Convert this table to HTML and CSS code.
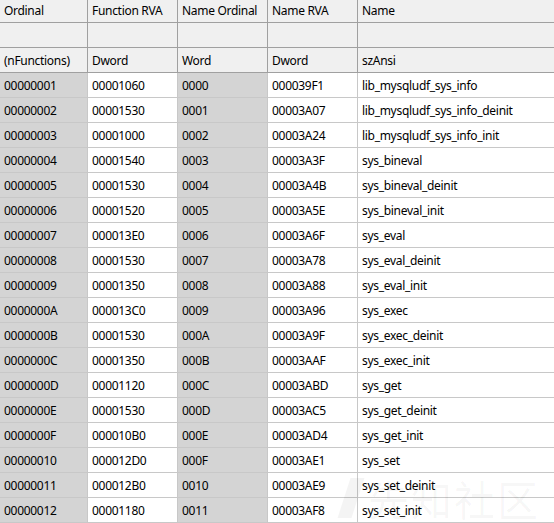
FILE: index.html
```html
<!DOCTYPE html>
<html>
<head>
<meta charset="utf-8">
<link rel="stylesheet" href="styles.css">
</head>
<body>
<div class="wrap">
<table class="grid">
<colgroup><col class="c1"><col class="c2"><col class="c3"><col class="c4"><col class="c5"></colgroup>
<thead>
<tr class="h1"><th>Ordinal</th><th>Function RVA</th><th>Name Ordinal</th><th>Name RVA</th><th>Name</th></tr>
<tr class="h2"><th></th><th></th><th></th><th></th><th></th></tr>
<tr class="h3"><th>(nFunctions)</th><th>Dword</th><th>Word</th><th>Dword</th><th>szAnsi</th></tr>
</thead>
<tbody>
<tr><td class="g">00000001</td><td>00001060</td><td class="g">0000</td><td>000039F1</td><td>lib_mysqludf_sys_info</td></tr>
<tr><td class="g">00000002</td><td>00001530</td><td class="g">0001</td><td>00003A07</td><td>lib_mysqludf_sys_info_deinit</td></tr>
<tr><td class="g">00000003</td><td>00001000</td><td class="g">0002</td><td>00003A24</td><td>lib_mysqludf_sys_info_init</td></tr>
<tr><td class="g">00000004</td><td>00001540</td><td class="g">0003</td><td>00003A3F</td><td>sys_bineval</td></tr>
<tr><td class="g">00000005</td><td>00001530</td><td class="g">0004</td><td>00003A4B</td><td>sys_bineval_deinit</td></tr>
<tr><td class="g">00000006</td><td>00001520</td><td class="g">0005</td><td>00003A5E</td><td>sys_bineval_init</td></tr>
<tr><td class="g">00000007</td><td>000013E0</td><td class="g">0006</td><td>00003A6F</td><td>sys_eval</td></tr>
<tr><td class="g">00000008</td><td>00001530</td><td class="g">0007</td><td>00003A78</td><td>sys_eval_deinit</td></tr>
<tr><td class="g">00000009</td><td>00001350</td><td class="g">0008</td><td>00003A88</td><td>sys_eval_init</td></tr>
<tr><td class="g">0000000A</td><td>000013C0</td><td class="g">0009</td><td>00003A96</td><td>sys_exec</td></tr>
<tr><td class="g">0000000B</td><td>00001530</td><td class="g">000A</td><td>00003A9F</td><td>sys_exec_deinit</td></tr>
<tr><td class="g">0000000C</td><td>00001350</td><td class="g">000B</td><td>00003AAF</td><td>sys_exec_init</td></tr>
<tr><td class="g">0000000D</td><td>00001120</td><td class="g">000C</td><td>00003ABD</td><td>sys_get</td></tr>
<tr><td class="g">0000000E</td><td>00001530</td><td class="g">000D</td><td>00003AC5</td><td>sys_get_deinit</td></tr>
<tr><td class="g">0000000F</td><td>000010B0</td><td class="g">000E</td><td>00003AD4</td><td>sys_get_init</td></tr>
<tr><td class="g">00000010</td><td>000012D0</td><td class="g">000F</td><td>00003AE1</td><td>sys_set</td></tr>
<tr><td class="g">00000011</td><td>000012B0</td><td class="g">0010</td><td>00003AE9</td><td>sys_set_deinit</td></tr>
<tr><td class="g">00000012</td><td>00001180</td><td class="g">0011</td><td>00003AF8</td><td>sys_set_init</td></tr>
</tbody>
</table>
<div class="watermark"><span class="wm-logo"></span><span class="wm-text">先知社区</span></div>
</div>
</body>
</html>
```
FILE: styles.css
```css
html, body {
  margin: 0;
  padding: 0;
  background: #ffffff;
  overflow: hidden;
}
.wrap {
  position: relative;
  width: 554px;
  height: 523px;
  overflow: hidden;
}
.grid {
  border-collapse: separate;
  border-spacing: 0;
  table-layout: fixed;
  width: 554px;
  font-family: "Segoe UI", "Noto Sans", "Open Sans", sans-serif;
  font-size: 12px;
  letter-spacing: -0.3px;
  color: #000;
}
.c1 { width: 88px; }
.c2 { width: 90px; }
.c3 { width: 90px; }
.c4 { width: 90px; }
.c5 { width: 196px; }
.grid th, .grid td {
  padding: 0 0 0 4px;
  text-align: left;
  font-weight: normal;
  white-space: nowrap;
  overflow: hidden;
  box-sizing: border-box;
  vertical-align: middle;
}
.grid th {
  background: #f0f0f0;
  border-right: 1px solid #a0a0a0;
  border-bottom: 1px solid #a0a0a0;
}
.grid th:last-child, .grid td:last-child { border-right: none; }
.h1 th { height: 23px; padding-bottom: 1px; }
.h2 th, .h3 th { height: 25px; }
.grid td {
  height: 25px;
  background: #ffffff;
  border-right: 1px solid #c8c8c8;
  border-bottom: 1px solid #c8c8c8;
}
.grid td.g { background: #d4d4d4; }
.watermark {
  position: absolute;
  left: 344px;
  top: 476px;
  display: flex;
  align-items: center;
  gap: 10px;
  pointer-events: none;
}
.wm-text {
  font-family: "Noto Sans CJK SC", sans-serif;
  font-size: 41px;
  line-height: 44px;
  letter-spacing: 2px;
  color: rgba(0, 0, 0, 0.04);
}
.wm-logo {
  width: 14px;
  height: 40px;
  background: rgba(0, 0, 0, 0.045);
  transform: skewX(-18deg);
}
```
